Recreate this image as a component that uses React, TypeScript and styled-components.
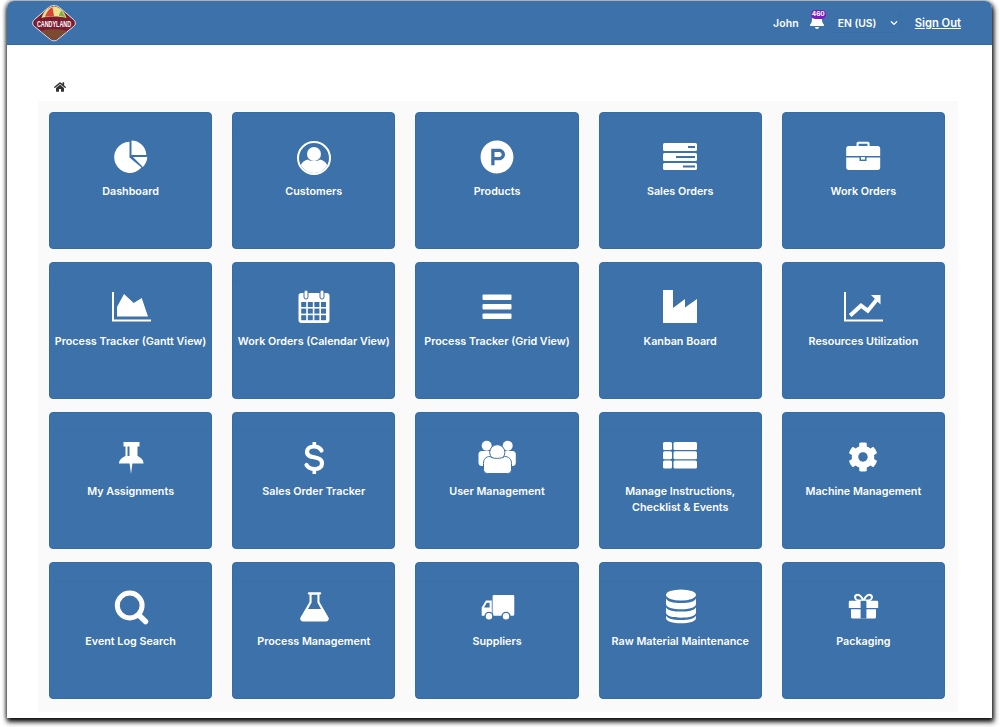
import React from "react";
import styled, { createGlobalStyle } from "styled-components";
import { FaBell, FaCog, FaChevronDown, FaHome, FaProductHunt } from "react-icons/fa";

const CARD = "#3c71a9";

const Global = createGlobalStyle`
  html, body { margin: 0; padding: 0; background: #fff; }
  body { font-family: Inter, "Liberation Sans", sans-serif; overflow: hidden; }
`;
const Stage = styled.div`
  width: 1000px;
  height: 727px;
  box-sizing: border-box;
  padding: 1px 8px 9px 7px;
  background: #fff;
  overflow: hidden;
`;
const Win = styled.div`
  height: 100%;
  background: #fff;
  border-radius: 7px 7px 0 0;
  box-shadow: 1px 3px 5px 1px rgba(0, 0, 0, 0.95), -1px 0 4px 0 rgba(0, 0, 0, 0.45);
  display: flex;
  flex-direction: column;
`;
const Header = styled.header`
  height: 44px;
  flex: none;
  box-sizing: border-box;
  background: ${CARD};
  border-bottom: 1px solid #2f68a4;
  border-radius: 7px 7px 0 0;
  padding: 0 31px 0 25px;
  display: flex;
  align-items: center;
  justify-content: space-between;
  color: #fff;
  font-size: 10.5px;
  font-weight: 600;
`;
const Right = styled.div`
  display: flex;
  align-items: center;
`;
const User = styled.span`
  margin-top: 2px;
  letter-spacing: 0.1px;
`;
const BellWrap = styled.span`
  position: relative;
  display: flex;
  margin: 0 0 3px 10px;
  font-size: 16px;
`;
const Badge = styled.span`
  position: absolute;
  left: 2px;
  top: -3px;
  width: 15px;
  height: 9px;
  border-radius: 5px;
  background: #7a1cc0;
  color: #fff;
  font-size: 6.5px;
  line-height: 9px;
  text-align: center;
  font-weight: 700;
`;
const Lang = styled.div`
  width: 74px;
  height: 20px;
  box-sizing: border-box;
  margin-left: 3px;
  padding: 0 3px 0 9px;
  border: 1px solid #3a6ea4;
  border-radius: 4px;
  display: flex;
  align-items: center;
  justify-content: space-between;
  font-size: 8px;
`;
const LangText = styled.span`
  font-size: 10.3px;
`;
const SignOut = styled.a`
  margin-left: 13px;
  color: #fff;
  font-size: 11.2px;
  text-decoration: underline;
`;
const Body = styled.main`
  flex: 1;
  padding: 32px 34px 6px 31px;
  display: flex;
  flex-direction: column;
  min-height: 0;
`;
const Crumb = styled.div`
  height: 20px;
  margin-bottom: 4px;
  flex: none;
  padding-left: 16px;
  display: flex;
  align-items: center;
  color: #333;
  font-size: 12px;
`;
const Panel = styled.section`
  flex: 1;
  background: #fafafa;
  padding: 11px 13px 12px 11px;
  display: grid;
  grid-template-columns: repeat(5, 1fr);
  grid-auto-rows: 137px;
  gap: 13px 20px;
`;
const Card = styled.div`
  position: relative;
  box-sizing: border-box;
  background: ${CARD};
  border: 1px solid #356ca6;
  border-radius: 4px;
  color: #fff;
  display: flex;
  flex-direction: column;
  align-items: center;
  padding-top: 26px;
  overflow: hidden;
`;
const CardTop = styled.div`
  position: absolute;
  left: 0;
  right: 0;
  top: 0;
  height: 18px;
  border-bottom: 1px solid #3b70a7;
`;
const IconBox = styled.div`
  position: relative;
  width: 40px;
  height: 36px;
  display: flex;
  align-items: center;
  justify-content: center;
  svg { display: block; }
`;
const Label = styled.div`
  margin-top: 9px;
  font-size: 10.75px;
  line-height: 16px;
  font-weight: 600;
  text-align: center;
  white-space: nowrap;
`;

const Svg: React.FC<{ children: React.ReactNode }> = ({ children }) => (
  <svg width="40" height="36" viewBox="0 0 40 36" fill="#fff">{children}</svg>
);

const Pie = () => (
  <Svg>
    <path d="M18.5 2.7A15.6 15.6 0 1 0 30.5 28.6L18.5 18.5Z" />
    <path d="M20.5 1.5V16H35.3A15 15 0 0 0 20.5 1.5Z" />
    <path d="M22 18H36.3A16 16 0 0 1 31.9 28Z" />
  </Svg>
);
const UserCircle = () => (
  <Svg>
    <circle cx="20" cy="19" r="16" fill="none" stroke="#fff" strokeWidth="2" />
    <circle cx="20" cy="15" r="7" />
    <path d="M6.8 26C8.5 22.5 11 21 14 20.4C16 22.5 24 22.5 26 20.4C29 21 31.5 22.5 33.2 26A15 15 0 0 1 6.8 26Z" />
  </Svg>
);
const Server = () => (
  <Svg>
    <path fillRule="evenodd" d="M4.5 4H35.5A1.5 1.5 0 0 1 37 5.5V10.5A1.5 1.5 0 0 1 35.5 12H4.5A1.5 1.5 0 0 1 3 10.5V5.5A1.5 1.5 0 0 1 4.5 4ZM28 7V9H35V7Z" />
    <path fillRule="evenodd" d="M4.5 14H35.5A1.5 1.5 0 0 1 37 15.5V20.5A1.5 1.5 0 0 1 35.5 22H4.5A1.5 1.5 0 0 1 3 20.5V15.5A1.5 1.5 0 0 1 4.5 14ZM16 17V19H35V17Z" />
    <path fillRule="evenodd" d="M4.5 24H35.5A1.5 1.5 0 0 1 37 25.5V29.5A1.5 1.5 0 0 1 35.5 31H4.5A1.5 1.5 0 0 1 3 29.5V25.5A1.5 1.5 0 0 1 4.5 24ZM23 26.5V28.5H35V26.5Z" />
  </Svg>
);
const Briefcase = () => (
  <Svg>
    <path fillRule="evenodd" d="M13.5 7V4.5A1.8 1.8 0 0 1 15.3 2.7H24.8A1.8 1.8 0 0 1 26.6 4.5V7H34.5A2.7 2.7 0 0 1 37.2 9.7V17H3.2V9.7A2.7 2.7 0 0 1 5.9 7ZM15.6 7H24.5V4.8H15.6Z" />
    <path d="M3.2 18.5H16.5V22H23.5V18.5H37.2V28.3A2.7 2.7 0 0 1 34.5 31H5.9A2.7 2.7 0 0 1 3.2 28.3Z" />
    <rect x="18" y="18" width="4" height="2.6" />
  </Svg>
);
const AreaChart = () => (
  <Svg>
    <path d="M1 3H3V30.5H40V32.5H1Z" />
    <path d="M6 18L13 5L22.7 14L30.7 9L37 27.5H6Z" />
  </Svg>
);
const Calendar = () => (
  <Svg>
    <rect x="4.5" y="4" width="31" height="30" rx="3" />
    <g fill={CARD}>
      {[0, 1, 2, 3].flatMap((c) =>
        [0, 1, 2].map((r) => <rect key={`${c}${r}`} x={7.2 + c * 6.6} y={13 + r * 6.6} width="5" height="5" />)
      )}
    </g>
    <rect x="10" y="1" width="4" height="9" rx="2" stroke={CARD} strokeWidth="1" />
    <rect x="26" y="1" width="4" height="9" rx="2" stroke={CARD} strokeWidth="1" />
  </Svg>
);
const Bars = () => (
  <Svg>
    <rect x="5.5" y="5.5" width="29" height="5.5" rx="1" />
    <rect x="5.5" y="15" width="29" height="5.5" rx="1" />
    <rect x="5.5" y="24.5" width="29" height="5.5" rx="1" />
  </Svg>
);
const Industry = () => (
  <Svg>
    <path d="M3 1H13V19L25 10V18.5L37 10V34H3Z" />
  </Svg>
);
const LineChart = () => (
  <Svg>
    <path d="M1 3H3V30.5H40V32.5H1Z" />
    <path d="M7.2 26.5L18 16.7L24.8 21.7L33.5 11" fill="none" stroke="#fff" strokeWidth="4" />
    <path d="M28 6H37.5V15.5Z" />
  </Svg>
);
const Pin = () => (
  <Svg>
    <path fillRule="evenodd" d="M12.5 3H28.5V7.5H26.5V17C29.5 18.5 32.5 20.5 32.5 24.5H21.4L20 35L18.6 24.5H8C8 20.5 11.5 18.5 14.5 17V7.5H12.5ZM16.5 7.5V17H18.5V7.5Z" />
  </Svg>
);
const Dollar = () => (
  <Svg>
    <path
      d="M27.5 11.5C26 8.8 23.5 7.5 20 7.5C15.5 7.5 13 10 13 13C13 21 28 15.5 28 24.5C28 27.8 25 30 20.5 30C17 30 14 28.5 12.5 26"
      fill="none"
      stroke="#fff"
      strokeWidth="4.2"
      strokeLinecap="round"
    />
    <rect x="18.5" y="3" width="3.6" height="5" />
    <rect x="18.5" y="30" width="3.6" height="5" />
  </Svg>
);
const Users = () => (
  <Svg>
    <circle cx="9.7" cy="6.7" r="5" />
    <circle cx="30.7" cy="6.7" r="5" />
    <path d="M1.5 14.5A3 3 0 0 1 4.5 12H15V27H5A3.5 3.5 0 0 1 1.5 23.5Z" />
    <path d="M38.8 14.5A3 3 0 0 0 35.8 12H25V27H35.3A3.5 3.5 0 0 0 38.8 23.5Z" />
    <circle cx="20.3" cy="13.3" r="7.6" stroke={CARD} strokeWidth="1" />
    <path d="M6.5 24.5C6.5 20 9 17.5 13 17.5C15 20 25.5 20 27.5 17.5C31.5 17.5 34.5 20 34.5 24.5V30A4 4 0 0 1 30.5 34.5H10.5A4 4 0 0 1 6.5 30Z" stroke={CARD} strokeWidth="1" />
  </Svg>
);
const ThList = () => (
  <Svg>
    {[3, 12.3, 21.6].map((y) => (
      <g key={y}>
        <rect x="3" y={y} width="9" height="8" rx="1.5" />
        <rect x="13.5" y={y} width="23.5" height="8" rx="1.5" />
      </g>
    ))}
  </Svg>
);
const Search = () => (
  <Svg>
    <circle cx="18.7" cy="16.5" r="12.4" fill="none" stroke="#fff" strokeWidth="5" />
    <path d="M27.5 25.8L34.5 32.5" stroke="#fff" strokeWidth="5.5" strokeLinecap="round" />
  </Svg>
);
const Flask = () => (
  <Svg>
    <rect x="13.8" y="3.3" width="13.4" height="2.2" rx="1" />
    <path fillRule="evenodd" d="M15.5 5H25.5V13L34.5 28.5A2.6 2.6 0 0 1 32.2 32.4H8.8A2.6 2.6 0 0 1 6.5 28.5L15.5 13ZM17.6 5.5V13.6L14 20H27L23.4 13.6V5.5Z" />
  </Svg>
);
const Truck = () => (
  <Svg>
    <path d="M17 6H36A1.3 1.3 0 0 1 37.3 7.3V25.5A1.3 1.3 0 0 1 36 26.8H15.6V7.4A1.4 1.4 0 0 1 17 6Z" />
    <path fillRule="evenodd" d="M14.8 11.5V26.8H4.7V18.5L9 11.5ZM9.8 13.7L7 18.5H12.6V13.7Z" />
    <circle cx="12" cy="27.3" r="3.9" stroke={CARD} strokeWidth="1.4" />
    <circle cx="29" cy="27.3" r="3.9" stroke={CARD} strokeWidth="1.4" />
  </Svg>
);
const Database = () => (
  <Svg>
    <ellipse cx="21" cy="6" rx="15" ry="5.5" />
    <path d="M6 9.5C8 13 13 14 21 14C29 14 34 13 36 9.5V15C36 18.5 29 20.3 21 20.3C13 20.3 6 18.5 6 15Z" />
    <path d="M6 18.5C8 21.5 13 22.6 21 22.6C29 22.6 34 21.5 36 18.5V23.5C36 27 29 28.7 21 28.7C13 28.7 6 27 6 23.5Z" />
    <path d="M6 26.8C8 30 13 31 21 31C29 31 34 30 36 26.8V29C36 32.5 29 34.3 21 34.3C13 34.3 6 32.5 6 29Z" />
  </Svg>
);
const Gift = () => (
  <Svg>
    <g fill="none" stroke="#fff" strokeWidth="2">
      <path d="M20.5 11.5C18 6.5 15.5 5 13.5 6C11 7.2 12 11 15 11.5Z" />
      <path d="M20.5 11.5C23 6.5 25.5 5 27.5 6C30 7.2 29 11 26 11.5Z" />
    </g>
    <path d="M5.8 13A1.2 1.2 0 0 1 7 11.8H34A1.2 1.2 0 0 1 35.2 13V19H5.8Z" />
    <path d="M8 20.3H33V28A1.5 1.5 0 0 1 31.5 29.5H9.5A1.5 1.5 0 0 1 8 28Z" />
    <rect x="17.6" y="11.8" width="5.8" height="17.7" fill={CARD} />
  </Svg>
);

const items: { label: React.ReactNode; icon: React.ReactNode }[] = [
  { label: "Dashboard", icon: <Pie /> },
  { label: "Customers", icon: <UserCircle /> },
  { label: "Products", icon: <FaProductHunt size={34} /> },
  { label: "Sales Orders", icon: <Server /> },
  { label: "Work Orders", icon: <Briefcase /> },
  { label: "Process Tracker (Gantt View)", icon: <AreaChart /> },
  { label: "Work Orders (Calendar View)", icon: <Calendar /> },
  { label: "Process Tracker (Grid View)", icon: <Bars /> },
  { label: "Kanban Board", icon: <Industry /> },
  { label: "Resources Utilization", icon: <LineChart /> },
  { label: "My Assignments", icon: <Pin /> },
  { label: "Sales Order Tracker", icon: <Dollar /> },
  { label: "User Management", icon: <Users /> },
  { label: <>Manage Instructions,<br />Checklist &amp; Events</>, icon: <ThList /> },
  { label: "Machine Management", icon: <FaCog size={30} /> },
  { label: "Event Log Search", icon: <Search /> },
  { label: "Process Management", icon: <Flask /> },
  { label: "Suppliers", icon: <Truck /> },
  { label: "Raw Material Maintenance", icon: <Database /> },
  { label: "Packaging", icon: <Gift /> },
];

const Logo = () => (
  <svg width="44" height="38" viewBox="0 0 44 38">
    <path d="M16.5 3.5C19 1 25 1 27.5 3.5L41.5 15.5C44 18 44 20.5 41.5 22.5L25.5 35.5C23.5 37.3 20.5 37.3 18.5 35.5L2.5 22.5C0 20.5 0 18 2.5 15.5Z" fill="#7c1c30" stroke="#e4eaf0" strokeWidth="1" />
    <path d="M9.5 14C12 6.5 17 2.5 22 2.5C27 2.5 32 6.5 34.5 14C28 12 16 12 9.5 14Z" fill="#efe08a" />
    <path d="M13 12.8C14.5 8 17.5 4.2 20.5 3.2L22 12Z" fill="#d7463c" />
    <path d="M27 12C27.5 9.5 28.5 7.5 29.5 6.5L33.5 13Z" fill="#7fae4a" />
    <path d="M9 27C15 24.8 29 24.8 35 27L24.5 35.4C23 36.4 21 36.4 19.5 35.4Z" fill="#7a4a33" />
    <text transform="translate(22 22.5) scale(1 1.6)" textAnchor="middle" fontFamily="'Liberation Sans', sans-serif" fontWeight="700" fontSize="5.4" fill="#fff">CANDYLAND</text>
  </svg>
);

export default function App() {
  return (
    <Stage>
      <Global />
      <Win>
        <Header>
          <Logo />
          <Right>
            <User>John</User>
            <BellWrap>
              <FaBell />
              <Badge>460</Badge>
            </BellWrap>
            <Lang>
              <LangText>EN (US)</LangText>
              <FaChevronDown />
            </Lang>
            <SignOut href="#">Sign Out</SignOut>
          </Right>
        </Header>
        <Body>
          <Crumb><FaHome /></Crumb>
          <Panel>
            {items.map((it, i) => (
              <Card key={i}>
                <CardTop />
                <IconBox>{it.icon}</IconBox>
                <Label>{it.label}</Label>
              </Card>
            ))}
          </Panel>
        </Body>
      </Win>
    </Stage>
  );
}
